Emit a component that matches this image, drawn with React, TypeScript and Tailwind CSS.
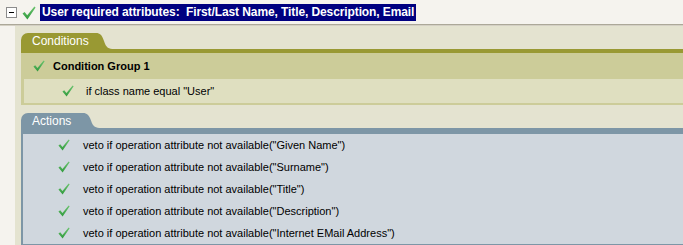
import React from 'react'

// small green tick used on every rule line
function Tick({ size = 13 }: { size?: number }) {
  return (
    <svg width={size} height={size} viewBox="0 0 14 14" className="shrink-0">
      <defs>
        <linearGradient id="tickg" x1="0" y1="0" x2="0" y2="1">
          <stop offset="0" stopColor="#6cc46f" />
          <stop offset="1" stopColor="#2f9a3c" />
        </linearGradient>
      </defs>
      <path d="M0.5 7.5 L2.6 6 L5.2 9.3 L12.4 0.6 L13.6 1.6 L5.4 13.4 Z" fill="url(#tickg)" />
    </svg>
  )
}

// rounded tab with the sloped right edge
function Tab({ label, color, height, width }: { label: string; color: string; height: number; width: number }) {
  return (
    <div className="flex items-stretch" style={{ height }}>
      <div
        className="flex items-center rounded-tl-[7px] pl-[11px] text-white text-[12px]"
        style={{ backgroundColor: color, width }}
      >
        {label}
      </div>
      <svg width="20" height={height} viewBox={`0 0 20 ${height}`} preserveAspectRatio="none">
        <path
          d={`M0 0 L2 0 C6 0 8 2 10 ${height * 0.5} C12 ${height - 1} 15 ${height} 20 ${height} L0 ${height} Z`}
          fill={color}
        />
      </svg>
    </div>
  )
}

const actions = ['Given Name', 'Surname', 'Title', 'Description', 'Internet EMail Address']

export default function App() {
  return (
    <div
      className="w-[683px] h-[245px] overflow-hidden bg-[#f5f3ee] text-[11px] text-black"
      style={{ fontFamily: '"Liberation Sans", Arial, sans-serif' }}
    >
      {/* Header */}
      <div className="h-[24px] flex items-center">
        <div className="ml-[6px] w-[11px] h-[11px] border border-[#8c8c8c] bg-white flex items-center justify-center">
          <div className="w-[5px] h-px bg-black" />
        </div>
        <div className="ml-[5px] mt-[1px]">
          <Tick size={14} />
        </div>
        <div className="ml-[4px] h-[17px] px-[2px] bg-[#000080] text-white font-bold text-[12px] tracking-[-0.1px] leading-[17px] whitespace-pre">
          User required attributes:  First/Last Name, Title, Description, Email
        </div>
      </div>
      <div className="h-px bg-[#aca899]" />
      <div className="h-px bg-[#d4d0c4]" />

      <div className="flex">
        <div className="w-[15px] shrink-0" />
        <div className="flex-1 bg-[#e4e3d0] pl-[6px] pt-[7px] h-[219px]">
          {/* Conditions */}
          <Tab label="Conditions" color="#999933" height={16} width={73} />
          <div className="h-[4px] bg-[#999933]" />
          <div className="bg-[#cccc99]">
            <div className="h-[26px] flex items-center pl-[12px]">
              <Tick size={12} />
              <span className="ml-[8px] font-bold">Condition Group 1</span>
            </div>
            <div className="pl-[3px] pb-[2px]">
              <div className="h-[24px] bg-[#dfdfc0] flex items-center pl-[38px]">
                <Tick size={12} />
                <span className="ml-[12px]">if class name equal "User"</span>
              </div>
            </div>
          </div>

          {/* Actions */}
          <div className="mt-[8px]">
            <Tab label="Actions" color="#7d96a6" height={15} width={60} />
            <div className="h-[6px] bg-[#7d96a6]" />
            <div className="bg-[#d0d7de] border-l-2 border-b-2 border-[#7d96a6]">
              {actions.map((a) => (
                <div key={a} className="h-[22px] flex items-center pl-[35px]">
                  <Tick size={12} />
                  <span className="ml-[13px]">veto if operation attribute not available("{a}")</span>
                </div>
              ))}
            </div>
          </div>
        </div>
      </div>
    </div>
  )
}
